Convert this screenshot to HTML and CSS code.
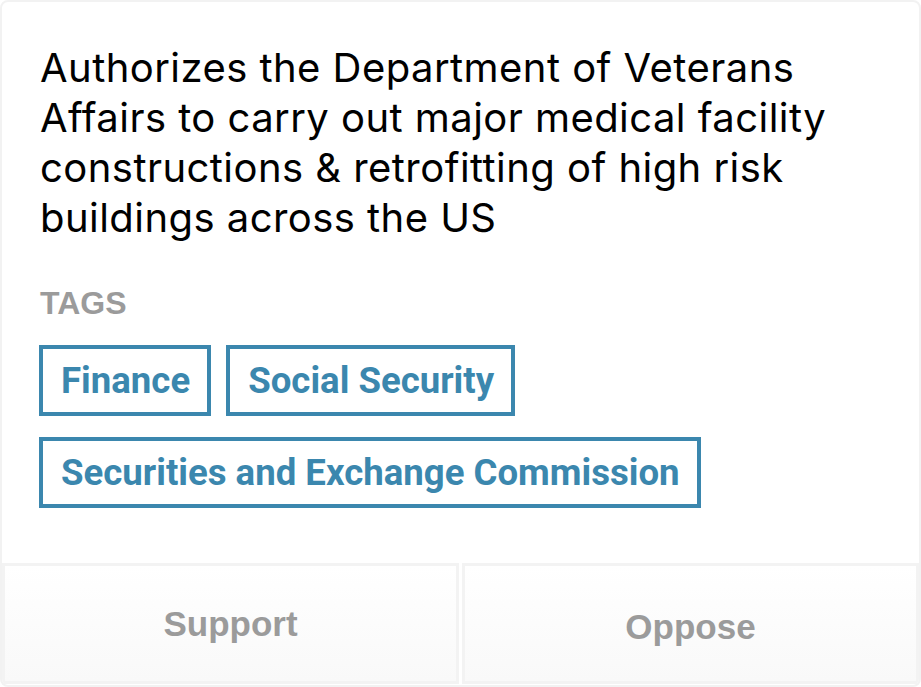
FILE: index.html
```html
<!DOCTYPE html>
<html lang="en">
<head>
<meta charset="utf-8">
<title>Bill card</title>
<link rel="stylesheet" href="styles.css">
</head>
<body>
<div class="card">
  <div class="content">
    <p class="summary">Authorizes the Department of Veterans Affairs to carry out major medical facility constructions &amp; retrofitting of high risk buildings across the US</p>
    <h3 class="tags-label">TAGS</h3>
    <ul class="tags">
      <li class="tag">Finance</li>
      <li class="tag">Social Security</li>
      <li class="tag">Securities and Exchange Commission</li>
    </ul>
  </div>
  <div class="actions">
    <button class="action action-support">Support</button>
    <button class="action action-oppose">Oppose</button>
  </div>
</div>
</body>
</html>
```

FILE: styles.css
```css
* { box-sizing: border-box; }
html, body { margin: 0; padding: 0; background: #ffffff; }
body { width: 921px; height: 687px; overflow: hidden; }

.card {
  width: 921px;
  height: 687px;
  border: 2px solid #f2f2f2;
  border-radius: 8px;
  display: flex;
  flex-direction: column;
  overflow: hidden;
}

.content {
  flex: 1;
  padding: 41px 38px 0 38px;
}

.summary {
  margin: 0;
  font-family: Inter, "Noto Sans", sans-serif;
  font-size: 40px;
  line-height: 50px;
  letter-spacing: 0.45px;
  color: #000;
}

.tags-label {
  margin: 38px 0 0 0;
  font-family: "Liberation Sans", Arial, sans-serif;
  font-weight: bold;
  font-size: 32px;
  line-height: 44px;
  color: #9b9b9b;
}

.tags {
  list-style: none;
  margin: 20px 0 0 -1px;
  padding: 0;
  display: flex;
  flex-wrap: wrap;
  gap: 21px 15px;
}

.tag {
  border: 4px solid #3b87ae;
  color: #3b87ae;
  font-family: Roboto, "Liberation Sans", sans-serif;
  font-weight: bold;
  font-size: 36.6px;
  line-height: 63px;
  height: 71px;
  padding: 0 17px 0 18px;
}

.actions {
  display: flex;
  gap: 3px;
  height: 121px;
  margin: 0 0 1px 0;
}

.action {
  flex: 1;
  border: 3px solid #f3f3f3;
  background: linear-gradient(#ffffff, #f9f9f9);
  font-family: "Liberation Sans", Arial, sans-serif;
  font-weight: bold;
  font-size: 35px;
  color: #9b9b9b;
  padding: 0;
  margin: 0;
  cursor: pointer;
}

.action-support { padding-top: 0; }
.action-oppose { padding-top: 6px; }
```
